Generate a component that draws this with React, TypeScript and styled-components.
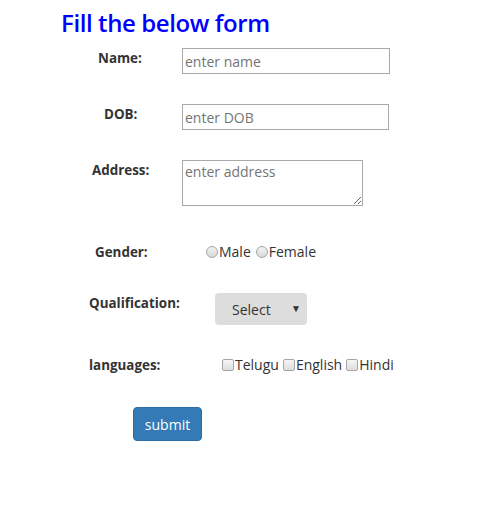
import React from "react";
import styled, { createGlobalStyle } from "styled-components";

const Global = createGlobalStyle`
  html, body { margin: 0; padding: 0; background: #fff; }
  body { font-family: "Open Sans", "Liberation Sans", sans-serif; color: #333; }
`;

const Page = styled.div`
  width: 478px;
  height: 511px;
  padding: 0 0 0 61px;
  box-sizing: border-box;
`;

const Title = styled.h2`
  margin: 0;
  padding-top: 8px;
  font-size: 24px;
  line-height: 30px;
  font-weight: 600;
  color: #0000ff;
  letter-spacing: -0.4px;
`;

const Form = styled.form`
  display: flex;
  flex-direction: column;
  padding-left: 28px;
`;

const Row = styled.div<{ $top: number; $labelW: number }>`
  display: grid;
  grid-template-columns: ${(p) => p.$labelW}px auto;
  align-items: start;
  margin-top: ${(p) => p.$top}px;
`;

const Label = styled.label<{ $indent: number; $pad?: number }>`
  padding-left: ${(p) => p.$indent}px;
  padding-top: ${(p) => p.$pad ?? 0}px;
  font-size: 13.4px;
  line-height: 18px;
  font-weight: 700;
  color: #333;
`;

const TextInput = styled.input<{ $w: number }>`
  width: ${(p) => p.$w}px;
  height: 26px;
  box-sizing: border-box;
  border: 1px solid #a9a9a9;
  padding: 0 2px;
  font-family: inherit;
  font-size: 14px;
  color: #333;
  outline: none;
  &::placeholder { color: #757575; }
`;

const TextArea = styled.textarea`
  width: 181px;
  height: 46px;
  box-sizing: border-box;
  border: 1px solid #a9a9a9;
  padding: 2px 2px;
  font-family: inherit;
  font-size: 14px;
  line-height: 18px;
  outline: none;
  &::placeholder { color: #757575; }
`;

const Choices = styled.div<{ $gap: number }>`
  display: flex;
  align-items: center;
  gap: ${(p) => p.$gap}px;
  font-size: 14px;
  line-height: 18px;
  color: #333;
`;

const Choice = styled.label`
  display: flex;
  align-items: center;
`;

const Radio = styled.input.attrs({ type: "radio" })`
  appearance: none;
  margin: 0 1px 0 0;
  width: 12px;
  height: 12px;
  border-radius: 50%;
  border: 1px solid #a6a6a6;
  background: linear-gradient(#f2f2f2, #d9d9d9);
  box-sizing: border-box;
`;

const Check = styled.input.attrs({ type: "checkbox" })`
  appearance: none;
  margin: 0 1px 0 0;
  width: 12px;
  height: 12px;
  border-radius: 2px;
  border: 1px solid #a6a6a6;
  background: linear-gradient(#f5f5f5, #dedede);
  box-sizing: border-box;
`;

const SelectBox = styled.div`
  position: relative;
  width: 92px;
  height: 32px;
  border-radius: 4px;
  background: #dddddd;
`;

const Select = styled.select`
  appearance: none;
  width: 100%;
  height: 100%;
  border: none;
  background: transparent;
  padding: 0 0 0 17px;
  font-family: inherit;
  font-size: 14px;
  color: #333;
`;

const Arrow = styled.span`
  position: absolute;
  right: 6px;
  top: 8px;
  font-size: 10px;
  line-height: 14px;
  color: #333;
  pointer-events: none;
`;

const ButtonRow = styled.div`
  margin-top: 33px;
  padding-left: 44px;
`;

const Submit = styled.button`
  width: 69px;
  height: 34px;
  border: 1px solid #2e6da4;
  border-radius: 4px;
  background: #337ab7;
  color: #fff;
  font-family: inherit;
  font-size: 14px;
`;

export default function App() {
  return (
    <Page>
      <Global />
      <Title>Fill the below form</Title>
      <Form onSubmit={(e) => e.preventDefault()}>
        <Row $top={10} $labelW={93}>
          <Label $indent={9} $pad={1}>Name:</Label>
          <TextInput $w={208} placeholder="enter name" />
        </Row>
        <Row $top={30} $labelW={93}>
          <Label $indent={15} $pad={1}>DOB:</Label>
          <TextInput $w={207} placeholder="enter DOB" />
        </Row>
        <Row $top={30} $labelW={93}>
          <Label $indent={3} $pad={1}>Address:</Label>
          <TextArea placeholder="enter address" />
        </Row>
        <Row $top={37} $labelW={117}>
          <Label $indent={6}>Gender:</Label>
          <Choices $gap={5}>
            <Choice><Radio name="g" />Male</Choice>
            <Choice><Radio name="g" />Female</Choice>
          </Choices>
        </Row>
        <Row $top={32} $labelW={126}>
          <Label $indent={0} $pad={1}>Qualification:</Label>
          <SelectBox>
            <Select defaultValue="">
              <option value="">Select</option>
              <option>B.Tech</option>
              <option>M.Tech</option>
            </Select>
            <Arrow>▼</Arrow>
          </SelectBox>
        </Row>
        <Row $top={31} $labelW={133}>
          <Label $indent={0}>languages:</Label>
          <Choices $gap={4}>
            <Choice><Check />Telugu</Choice>
            <Choice><Check />English</Choice>
            <Choice><Check />Hindi</Choice>
          </Choices>
        </Row>
        <ButtonRow>
          <Submit type="submit">submit</Submit>
        </ButtonRow>
      </Form>
    </Page>
  );
}
